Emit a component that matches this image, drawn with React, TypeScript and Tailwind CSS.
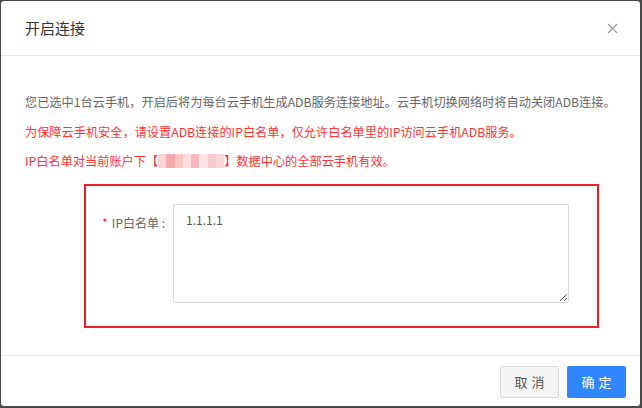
const mosaic = ["#fbd3d3", "#f7a9a9", "#fcc4c4", "#ffdede", "#f8b6bc", "#fde3e6", "#f9c9cf", "#fbd8d8"];

export default function App() {
  return (
    <div
      className="w-[642px] h-[408px] bg-[#4a4a4a] pt-px pl-px pr-[2px] pb-[2px]"
      style={{ fontFamily: '"Noto Sans CJK SC", "Noto Sans", sans-serif' }}
    >
      <div className="h-full bg-white rounded-[3px] flex flex-col">
        {/* 头部 */}
        <div className="h-[55px] shrink-0 border-b border-[#e8e8e8] flex items-center justify-between pl-[24px] pr-[22px]">
          <h2 className="text-[15px] text-[#333]">开启连接</h2>
          <svg width="11" height="11" viewBox="0 0 11 11" className="mt-[1px]">
            <path d="M1 1L10 10M10 1L1 10" stroke="#9a9a9a" strokeWidth="1.2" />
          </svg>
        </div>

        {/* 内容 */}
        <div className="flex-1 pt-[36px] pl-[24px]">
          <div className="flex flex-col gap-[9.5px] text-[12.2px] leading-[20px]">
            <p className="text-[#666]">
              您已选中1台云手机，开启后将为每台云手机生成ADB服务连接地址。云手机切换网络时将自动关闭ADB连接。
            </p>
            <p className="text-[#ff3333]">
              为保障云手机安全，请设置ADB连接的IP白名单，仅允许白名单里的IP访问云手机ADB服务。
            </p>
            <p className="text-[#ff3333] flex items-center">
              <span>IP白名单对当前账户下【</span>
              <span className="inline-flex h-[14px] w-[66px] overflow-hidden">
                {mosaic.map((c, i) => (
                  <span key={i} className="flex-1" style={{ backgroundColor: c }} />
                ))}
              </span>
              <span>】数据中心的全部云手机有效。</span>
            </p>
          </div>

          <div className="mt-[13px] ml-[59px] w-[515px] h-[144px] border-2 border-[#ee1c25] pt-[18px] flex">
            <label className="w-[79px] pt-[9px] text-right text-[12px] leading-[20px] text-[#666]">
              <span className="text-[#f5222d] mr-[4px]">*</span>
              IP白名单 :
            </label>
            <textarea
              defaultValue="1.1.1.1"
              className="ml-[8px] w-[396px] h-[99px] border border-[#d9d9d9] rounded-[2px] px-[12px] py-[5px] text-[12px] leading-[20px] text-[#555] outline-none"
            />
          </div>
        </div>

        {/* 底部 */}
        <div className="shrink-0 border-t border-[#e8e8e8] pt-[10px] pb-[8px] pr-[14px] flex justify-end gap-[8px]">
          <button className="w-[59px] h-[32px] rounded-[2px] border border-[#d9d9d9] bg-[#f5f5f5] text-[13px] text-[#555] tracking-[4px] indent-[4px]">
            取消
          </button>
          <button className="w-[59px] h-[32px] rounded-[2px] bg-[#3086fc] text-[13px] text-white tracking-[4px] indent-[4px]">
            确定
          </button>
        </div>
      </div>
    </div>
  );
}
